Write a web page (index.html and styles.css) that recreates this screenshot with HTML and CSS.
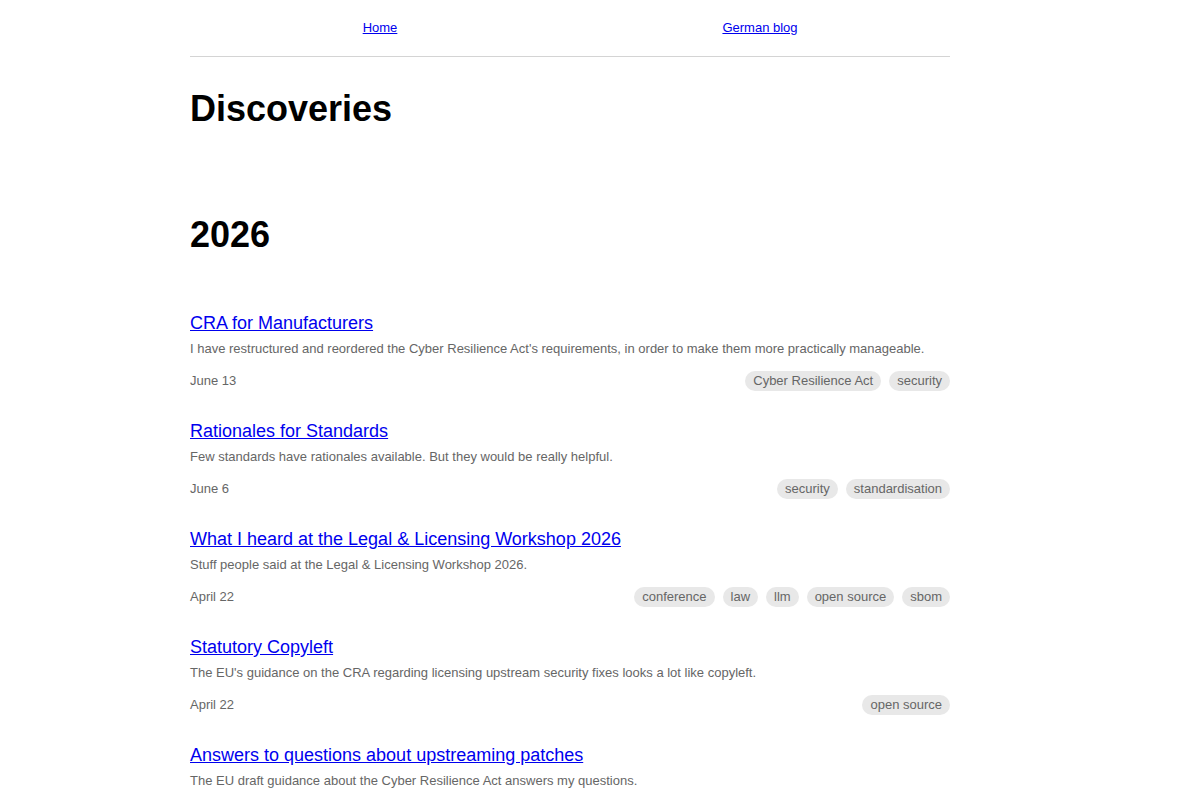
FILE: index.html
```html
<!DOCTYPE html>
<html lang="en">
<head>
  <meta charset="UTF-8" />
  <meta name="viewport" content="width=device-width, initial-scale=1.0"/>
  <title>Discoveries</title>
  <link rel="stylesheet" href="styles.css">
</head>
<body>
  <div class="page">
    <nav class="topnav">
      <div class="nav-item"><a href="#">Home</a></div>
      <div class="nav-item"><a href="#">German blog</a></div>
    </nav>

    <h1>Discoveries</h1>

    <h2 class="year">2026</h2>

    <div class="post">
      <a class="post-title" href="#">CRA for Manufacturers</a>
      <p class="post-desc">I have restructured and reordered the Cyber Resilience Act's requirements, in order to make them more practically manageable.</p>
      <div class="post-meta">
        <span class="date">June 13</span>
        <div class="tags">
          <span class="tag">Cyber Resilience Act</span>
          <span class="tag">security</span>
        </div>
      </div>
    </div>

    <div class="post">
      <a class="post-title" href="#">Rationales for Standards</a>
      <p class="post-desc">Few standards have rationales available. But they would be really helpful.</p>
      <div class="post-meta">
        <span class="date">June 6</span>
        <div class="tags">
          <span class="tag">security</span>
          <span class="tag">standardisation</span>
        </div>
      </div>
    </div>

    <div class="post">
      <a class="post-title" href="#">What I heard at the Legal &amp; Licensing Workshop 2026</a>
      <p class="post-desc">Stuff people said at the Legal &amp; Licensing Workshop 2026.</p>
      <div class="post-meta">
        <span class="date">April 22</span>
        <div class="tags">
          <span class="tag">conference</span>
          <span class="tag">law</span>
          <span class="tag">llm</span>
          <span class="tag">open source</span>
          <span class="tag">sbom</span>
        </div>
      </div>
    </div>

    <div class="post">
      <a class="post-title" href="#">Statutory Copyleft</a>
      <p class="post-desc">The EU's guidance on the CRA regarding licensing upstream security fixes looks a lot like copyleft.</p>
      <div class="post-meta">
        <span class="date">April 22</span>
        <div class="tags">
          <span class="tag">open source</span>
        </div>
      </div>
    </div>

    <div class="post">
      <a class="post-title" href="#">Answers to questions about upstreaming patches</a>
      <p class="post-desc">The EU draft guidance about the Cyber Resilience Act answers my questions.</p>
      <div class="post-meta">
        <span class="date">April 14</span>
        <div class="tags">
          <span class="tag">Cyber Resilience Act</span>
          <span class="tag">open source</span>
        </div>
      </div>
    </div>
  </div>
</body>
</html>
```

FILE: styles.css
```css
body {
  margin: 0;
  font-family: 'Liberation Sans', Arial, sans-serif;
  color: #000;
  background: #fff;
}

.page {
  width: 760px;
  margin: 0 0 0 190px;
}

.topnav {
  display: flex;
  padding: 20px 0 20px;
  border-bottom: 1px solid #d4d4d4;
  font-size: 13px;
  line-height: 16px;
}

.nav-item {
  flex: 1;
  text-align: center;
}

.nav-item a {
  color: #0000ee;
}

h1 {
  font-size: 36px;
  line-height: 43px;
  margin: 30px 0 0;
}

.year {
  font-size: 36px;
  line-height: 43px;
  margin: 83px 0 56px;
}

.post {
  margin-bottom: 29px;
}

.post-title {
  display: block;
  width: fit-content;
  font-size: 18px;
  line-height: 22px;
  color: #0000ee;
}

.post-desc {
  margin: 6px 0 0;
  font-size: 13px;
  line-height: 18px;
  color: #666;
}

.post-meta {
  display: flex;
  justify-content: space-between;
  align-items: center;
  margin-top: 13px;
  font-size: 13px;
  line-height: 20px;
  color: #666;
}

.tags {
  display: flex;
  gap: 8px;
}

.tag {
  background: #e8e8e8;
  border-radius: 10px;
  padding: 0 8px;
}
```
